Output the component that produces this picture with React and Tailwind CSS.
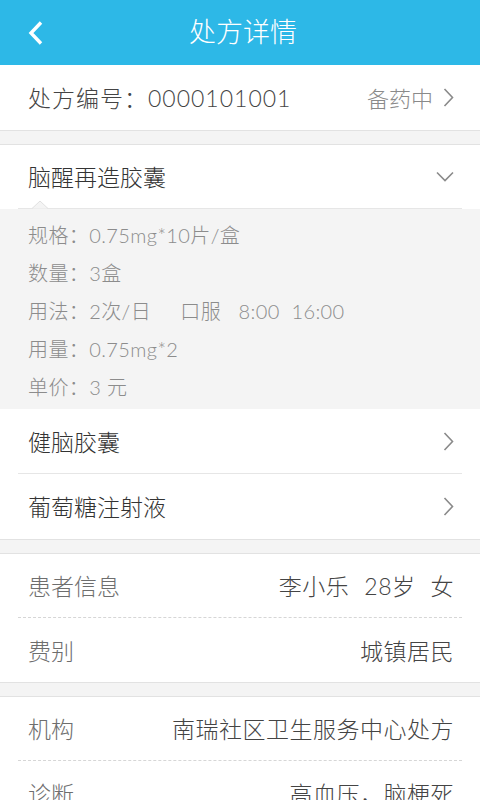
const font = { fontFamily: 'Lato, "Noto Sans CJK SC", sans-serif' }

function Chevron({ className = '' }) {
  return (
    <svg className={className} width="11" height="19" viewBox="0 0 11 19" fill="none">
      <path d="M1.5 1 L9.5 9.5 L1.5 18" stroke="#8a8a8a" strokeWidth="1.6" />
    </svg>
  )
}

function Gap() {
  return <div className="h-[15px] bg-[#f4f4f4] border-y border-[#e2e2e2]" />
}

function DrugRow({ name, last }) {
  return (
    <div className="bg-white">
      <div className={`mx-[18px] h-[65px] flex items-center justify-between pl-[10px] pr-[8px] ${last ? '' : 'border-b border-[#e6e6e6]'}`}>
        <span className="text-[23px] text-[#333] font-light pt-[2px]">{name}</span>
        <Chevron />
      </div>
    </div>
  )
}

function InfoRow({ label, children, dashed }) {
  return (
    <div className={`mx-[18px] h-[64px] flex items-center justify-between pl-[10px] pr-[8px] ${dashed ? 'border-b border-dashed border-[#d6d6d6]' : ''}`}>
      <span className="text-[23px] text-[#6e6e6e] font-light pt-[2px]">{label}</span>
      <span className="text-[23px] text-[#444] font-light flex gap-[15px] pt-[2px] tracking-[0.5px]">{children}</span>
    </div>
  )
}

export default function App() {
  const details = [
    '规格：0.75mg*10片/盒',
    '数量：3盒',
    '用法：2次/日     口服   8:00  16:00',
    '用量：0.75mg*2',
    '单价：3 元',
  ]
  return (
    <div className="w-[480px] h-[800px] overflow-hidden bg-[#f4f4f4]" style={font}>
      <div className="h-[65px] bg-[#2db8e7] flex items-center relative">
        <svg className="absolute left-[27px]" width="18" height="24" viewBox="0 0 18 24" fill="none">
          <path d="M14 1.5 L4 12 L14 22.5" stroke="white" strokeWidth="3.4" />
        </svg>
        <div className="w-full text-center text-[27px] text-white font-light pl-[6px]">处方详情</div>
      </div>

      <div className="bg-white h-[65px] flex items-center justify-between pl-[28px] pr-[26px]">
        <span className="text-[23px] text-[#444] font-light tracking-[1px] pt-[2px]">处方编号：0000101001</span>
        <span className="flex items-center gap-[10px] text-[22px] text-[#8a8a8a] font-light">
          <span className="pt-[2px]">备药中</span>
          <Chevron />
        </span>
      </div>

      <Gap />

      <div className="bg-white relative">
        <div className="mx-[18px] h-[64px] flex items-center justify-between pl-[10px] pr-[8px] border-b border-[#e6e6e6]">
          <span className="text-[23px] text-[#333] font-light pt-[2px]">脑醒再造胶囊</span>
          <svg width="18" height="11" viewBox="0 0 18 11" fill="none">
            <path d="M1 1.5 L9 9.5 L17 1.5" stroke="#8a8a8a" strokeWidth="1.6" />
          </svg>
        </div>
        <svg className="absolute left-[32px] bottom-0" width="16" height="10" viewBox="0 0 16 10">
          <path d="M0 9.5 L8 2 L16 9.5" fill="#f4f4f4" stroke="#e0e0e0" strokeWidth="1" />
        </svg>
      </div>

      <div className="bg-[#f4f4f4] pt-[7px] pb-[3px] pl-[28px]">
        {details.map((d) => (
          <div key={d} className="h-[38px] flex items-center text-[20px] text-[#8c8c8c] font-light whitespace-pre tracking-[0.4px]">
            {d}
          </div>
        ))}
      </div>

      <DrugRow name="健脑胶囊" />
      <DrugRow name="葡萄糖注射液" last />

      <Gap />

      <div className="bg-white">
        <InfoRow label="患者信息" dashed>
          <span>李小乐</span>
          <span>28岁</span>
          <span>女</span>
        </InfoRow>
        <InfoRow label="费别">
          <span>城镇居民</span>
        </InfoRow>
      </div>

      <Gap />

      <div className="bg-white">
        <InfoRow label="机构" dashed>
          <span>南瑞社区卫生服务中心处方</span>
        </InfoRow>
        <InfoRow label="诊断">
          <span>高血压，脑梗死</span>
        </InfoRow>
      </div>
    </div>
  )
}
